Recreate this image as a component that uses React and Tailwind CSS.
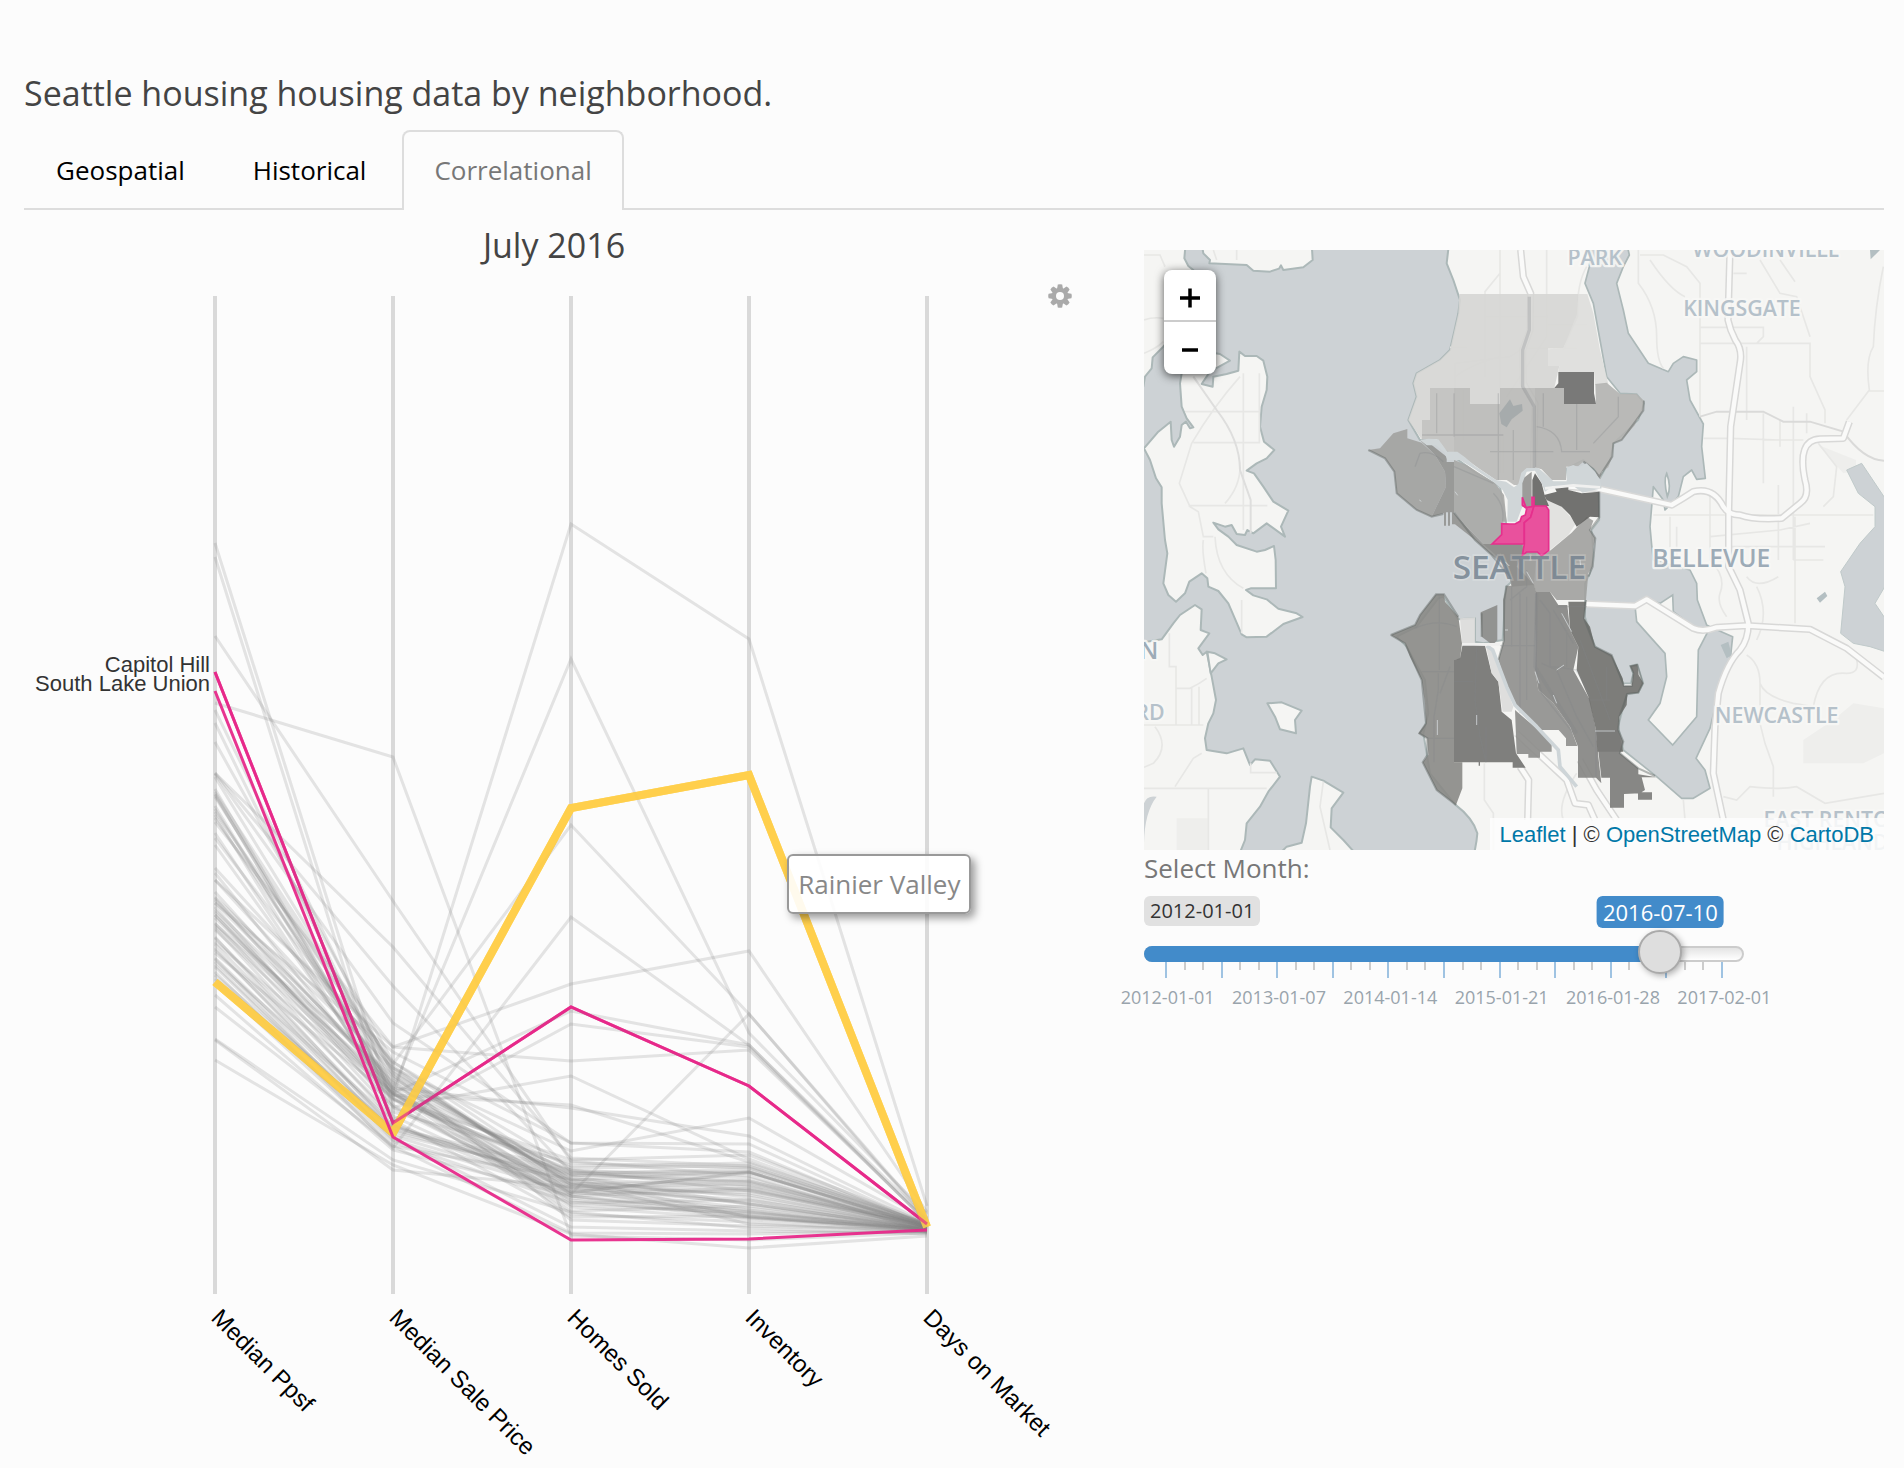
import React, { useState } from "react";

const AXES = [
  { x: 215, label: "Median Ppsf" },
  { x: 393, label: "Median Sale Price" },
  { x: 571, label: "Homes Sold" },
  { x: 749, label: "Inventory" },
  { x: 927, label: "Days on Market" },
];

// One row per neighborhood: height of its line on each of the five axes.
const NEIGHBORHOODS = [
  [543, 1108, 1196, 1190, 1224],
  [557, 1124, 1188, 1200, 1228],
  [636, 901, 1161, 1176, 1232],
  [703, 757, 1236, 1240, 1233],
  [710, 1075, 1220, 1226, 1230],
  [723, 1088, 1205, 1213, 1228],
  [742, 1062, 1180, 1172, 1226],
  [773, 947, 1158, 1166, 1224],
  [773, 986, 1172, 1182, 1227],
  [774, 1023, 1143, 1144, 1225],
  [777, 1068, 1185, 1195, 1228],
  [789, 1093, 1011, 1045, 1222],
  [792, 1066, 1192, 1210, 1230],
  [794, 1095, 1176, 1172, 1227],
  [795, 1090, 1190, 1216, 1231],
  [797, 1072, 1183, 1190, 1227],
  [806, 1097, 524, 639, 1206],
  [809, 1089, 659, 1033, 1214],
  [812, 1064, 825, 1014, 1220],
  [815, 1105, 1200, 1218, 1229],
  [818, 1078, 1174, 1169, 1226],
  [822, 1047, 984, 951, 1212],
  [833, 1099, 1175, 1181, 1224],
  [838, 1070, 1187, 1203, 1230],
  [845, 1093, 1194, 1014, 1218],
  [868, 1062, 1168, 1166, 1225],
  [873, 1095, 1105, 1162, 1224],
  [880, 1047, 1061, 1050, 1221],
  [880, 1073, 1184, 1204, 1229],
  [892, 1088, 1108, 1136, 1223],
  [897, 1068, 1151, 1118, 1220],
  [898, 1099, 1160, 1155, 1223],
  [900, 1082, 1194, 1188, 1228],
  [903, 1052, 1143, 1152, 1226],
  [903, 1080, 1179, 1187, 1227],
  [907, 1107, 1076, 1159, 1224],
  [910, 1083, 1202, 1214, 1229],
  [912, 1100, 1170, 1178, 1227],
  [915, 1094, 1193, 1172, 1226],
  [915, 1107, 1186, 1193, 1228],
  [918, 1090, 1207, 1219, 1230],
  [923, 1112, 1163, 1168, 1225],
  [924, 1076, 1182, 1224, 1232],
  [926, 1086, 1172, 1172, 1226],
  [928, 1120, 1024, 1047, 1222],
  [930, 1093, 1211, 1206, 1229],
  [937, 1130, 1173, 1185, 1226],
  [938, 1116, 1198, 1211, 1231],
  [942, 1094, 1166, 1163, 1224],
  [944, 1125, 1196, 1217, 1229],
  [948, 1134, 1176, 1204, 1228],
  [950, 1126, 1184, 1181, 1227],
  [953, 1098, 1214, 1222, 1232],
  [958, 1131, 1180, 1197, 1228],
  [959, 1140, 1192, 1173, 1227],
  [962, 1120, 1217, 1216, 1230],
  [965, 1136, 1189, 1208, 1229],
  [967, 1138, 1227, 1231, 1233],
  [972, 1148, 917, 1045, 1219],
  [975, 1128, 1170, 1191, 1226],
  [979, 1142, 1203, 1200, 1229],
  [983, 1146, 1233, 1234, 1231],
  [995, 1150, 1196, 1212, 1230],
  [1007, 1146, 1179, 1217, 1232],
  [1039, 1160, 1212, 1228, 1234],
  [1040, 1170, 1187, 1184, 1227],
  [1060, 1165, 1234, 1248, 1236],
];

const SELECTED = [
  { name: "Capitol Hill", row: [672, 1123, 1007, 1086, 1224] },
  { name: "South Lake Union", row: [691, 1137, 1240, 1239, 1230] },
];

const HOVERED = { name: "Rainier Valley", row: [982, 1133, 808, 775, 1227] };

const toPoints = (row) => row.map((y, i) => `${AXES[i].x},${y}`).join(" ");

function ParallelChart() {
  return (
    <svg viewBox="24 280 1060 1180" className="block w-full" role="img" aria-label="Parallel coordinates of housing measures">
      <g stroke="#d9d9d9" strokeWidth="4">
        {AXES.map((a) => (
          <line key={a.label} x1={a.x} x2={a.x} y1="296" y2="1294" />
        ))}
      </g>
      <polyline points={toPoints(SELECTED[0].row)} fill="none" stroke="#e7298a" strokeWidth="3" />
      <polyline points={toPoints(HOVERED.row)} fill="none" stroke="#ffcf4a" strokeOpacity="0.93" strokeWidth="8" />
      <g fill="none" stroke="#808080" strokeOpacity="0.2" strokeWidth="3">
        {NEIGHBORHOODS.filter((_, i) => i % 4 !== 0).map((row, i) => (
          <polyline key={i} points={toPoints(row)} />
        ))}
      </g>
      <g fill="none" stroke="#808080" strokeOpacity="0.2" strokeWidth="3">
        {NEIGHBORHOODS.filter((_, i) => i % 4 === 0).map((row, i) => (
          <polyline key={i} points={toPoints(row)} />
        ))}
      </g>
      <polyline points={toPoints(HOVERED.row)} fill="none" stroke="#ffcf4a" strokeOpacity="0.85" strokeWidth="8" />
      <polyline points={toPoints(SELECTED[0].row)} fill="none" stroke="#e7298a" strokeOpacity="0.7" strokeWidth="3" />
      <polyline points={toPoints(SELECTED[1].row)} fill="none" stroke="#e7298a" strokeOpacity="0.95" strokeWidth="3" />
      <g fontFamily="'Liberation Sans', sans-serif" fontSize="22" fill="#333" textAnchor="end">
        {SELECTED.map((s) => (
          <text key={s.name} x="210" y={s.row[0]}>{s.name}</text>
        ))}
      </g>
      <g fontFamily="'Liberation Sans', sans-serif" fontSize="24" fill="#000">
        {AXES.map((a) => (
          <text key={a.label} transform={`translate(${a.x - 5} 1319) rotate(45)`}>{a.label}</text>
        ))}
      </g>
    </svg>
  );
}

function GearIcon() {
  return (
    <svg viewBox="0 0 24 24" className="size-6" aria-hidden="true">
      <g fill="#aaa">
        {[0, 45, 90, 135].map((deg) => (
          <path key={deg} d="M9.8 0.6 Q12 -0.1 14.2 0.6 L15 5 V19 L14.2 23.4 Q12 24.1 9.8 23.4 L9 19 V5 Z" transform={`rotate(${deg} 12 12)`} />
        ))}
        <circle cx="12" cy="12" r="8" />
      </g>
      <circle cx="12" cy="12" r="4" fill="#fcfcfc" />
    </svg>
  );
}

const HIGHWAYS = [
  "M1800,30 L1794,240 Q1800,270 1816,300 Q1838,330 1830,370 L1802,560 L1796,820 V980 L1830,1050 L1855,1150 Q1855,1200 1830,1230 Q1790,1270 1765,1360 L1755,1460 L1750,1600 L1780,1740",
  "M1315,740 L1400,745 L1625,795 Q1660,775 1690,755 Q1750,740 1780,800 Q1795,825 1830,825 Q1870,840 1955,835 L2010,790 Q2040,770 2025,720 Q2000,600 2070,597 L2140,595 L2158,545",
  "M1368,1092 L1515,1098 L1550,1078 L1690,1165 Q1720,1178 1760,1162 L1850,1157 L2040,1168 L2150,1225 L2262,1312",
  "M1172,30 L1180,110 L1202,160 L1200,270 L1178,330 L1180,430 L1215,490 L1210,690",
  "M1160,1480 L1310,1620 L1335,1690 L1375,1695 L1395,1740",
  "M1350,1560 L1400,1650 L1460,1740",
  "M1170,1580 L1196,1620 L1193,1740",
];

const MINOR_ROADS =
  "M42,45 H90 L105,80 M250,30 L260,60 M320,30 V60 M42,240 Q70,230 100,235 M42,340 Q80,325 100,305" +
  " M165,515 H388 M190,608 H388 V400 M340,400 V870 M330,410 Q250,500 185,610 L148,730 L180,800 L205,815 L220,890 H250 M175,797 H412 M330,680 Q330,740 285,790 M220,900 Q215,930 228,1000 M255,890 Q260,1000 340,1045 M335,1080 V1180" +
  " M118,1180 V1280 H138 V1455 M138,1345 H180 Q210,1330 230,1315 M185,1340 V1455 M207,1340 V1455 M42,1455 H220 M75,1460 Q120,1520 70,1570 L42,1582 M215,1540 L190,1555 L135,1640 M42,1645 H410 M235,1645 V1830 M362,1570 V1598 H440 M580,1625 L570,1700 L600,1830" +
  " M1110,30 V700 M1110,100 L1065,155 V410 M1065,230 H1255 M960,322 H1010 M975,370 L1140,350 L1180,325 H1340 M975,410 Q1030,370 1110,350 M975,370 V600 M1250,30 V290 L1130,470 M1370,80 Q1340,130 1342,230 L1300,330 M1254,254 H1370 M890,585 H1120 V700 M1000,450 V600" +
  " M1525,30 V130 Q1580,200 1580,290 Q1580,360 1600,385 M1530,45 H1600 L1670,80 L1710,130 V530 M1560,60 Q1620,150 1665,170 M1710,262 H1900 V290 L1880,310 H1710 M1710,310 H2040 V410 L2085,510 V550 M1850,320 V540 M1810,100 H1850 M1890,60 L1950,160 L2000,170 L2040,290 M1950,60 L1995,125 M2260,80 Q2235,200 2230,320 Q2205,360 2218,450 L2150,540 M2218,453 H2262" +
  " M1720,595 H1800 L1950,600 H2020 M1900,520 V730 M1990,500 V960 M1950,540 V620 M2030,520 V580 M1570,825 H2230 M1640,860 V960 M1620,830 V960 M1740,760 V960 M1740,890 L1950,870 L2040,850 M1790,920 H2085 M1945,735 V960 M1995,830 V1150 M1990,960 H2080 M2065,610 L2120,680 L2110,770 L2080,800" +
  " M1850,1010 Q1880,1050 1945,1010 M1740,900 V960 Q1790,1010 1770,1060 Q1760,1090 1790,1130 M1880,1040 Q1920,1120 1880,1200 M1850,1245 Q1890,1270 1890,1330 Q1905,1370 1990,1390 L2050,1400 Q2070,1290 2150,1300 Q2190,1300 2180,1260 M1890,1330 L1890,1450 L1905,1510 L1930,1580 V1670 M1780,1670 L1820,1680 L1860,1640 Q1950,1650 2000,1640 L2085,1690 L2262,1660 M1063,1570 V1680 L1090,1720 V1830 M1660,1680 L1665,1740 M1300,1740 Q1280,1690 1340,1600";

const MAP_LABELS = [
  { text: "KINGSGATE", x: 1836, y: 228, size: 64, fill: "#b5c1ca" },
  { text: "WOODINVILLE", x: 1908, y: 52, size: 64, fill: "#b5c1ca" },
  { text: "PARK", x: 1394, y: 75, size: 64, fill: "#b5c1ca" },
  { text: "BELLEVUE", x: 1744, y: 982, size: 74, fill: "#9dabb7" },
  { text: "NEWCASTLE", x: 1940, y: 1448, size: 64, fill: "#b5c1ca" },
  { text: "EAST RENTON", x: 2115, y: 1760, size: 64, fill: "#b5c1ca" },
  { text: "HIGHLANDS", x: 2125, y: 1830, size: 64, fill: "#b5c1ca" },
  { text: "N", x: 57, y: 1258, size: 72, fill: "#9dabb7" },
  { text: "RD", x: 60, y: 1440, size: 64, fill: "#b5c1ca" },
];

// Neighborhood areas, in the coordinates of the translated group that holds them.
const DISTRICTS = [
  { fill: "#d6d6d4", d: "M298,-258 H655 V-190 L610,-95 H564 V-42 H598 L583,24 H210 V120 H186 V180 L145,120 L170,50 L160,10 L170,-20 L240,-60 L270,-90 L295,-200 Z M330,24 V72 H420 V24 Z" },
  { fill: "#dededc", d: "M655,-258 H682 L700,-200 L720,-90 L745,12 L705,15 L702,-24 H595 L598,-42 H564 V-92 L610,-95 L650,-195 Z" },
  { fill: "#c0c0be", d: "M210,24 H282 V230 L262,215 L230,178 H186 V120 H210 Z" },
  { fill: "#b9b9b7", d: "M282,24 H330 V72 H420 V24 H525 V268 L495,270 L475,315 H462 L440,300 L408,300 L360,268 L310,232 L282,220 Z" },
  { fill: "#b2b2b0", d: "M525,24 H612 V72 H708 L706,12 L740,8 L780,42 L830,42 L852,62 L850,92 L830,120 L825,135 L785,180 L760,190 L757,230 L745,262 L725,275 L722,296 L712,290 L705,268 L670,245 L655,258 L618,260 V300 H575 L545,268 L525,262 Z" },
  { fill: "#6c6c6a", d: "M595,-24 H702 V40 L708,72 H612 V24 H583 L595,10 Z" },
  { fill: "#a3a8aa", d: "M418,100 L450,58 L460,78 L486,72 L488,92 L455,118 L440,142 L424,132 Z" },
  { fill: "#a2a2a0", d: "M25,210 L60,205 L100,160 L142,147 V175 L185,188 L225,225 L255,275 L258,320 L215,410 L170,390 L110,340 L103,275 L75,235 Z" },
  { fill: "#939391", d: "M180,180 L215,195 L260,230 V246 H282 V398 L315,435 L370,492 H490 L492,515 L530,515 L522,615 L455,620 L440,560 L395,525 L345,480 L285,433 H276 V397 H270 V437 H264 V397 H258 V437 H252 V400 L215,410 L258,320 L255,275 L225,225 Z" },
  { fill: "#a8a8a6", d: "M282,240 L320,255 L405,310 L432,345 L440,425 H425 V462 L396,492 H370 L315,435 L282,395 Z" },
  { fill: "#e0e0de", d: "M555,355 L600,375 L648,430 L625,465 L567,512 Z" },
  { fill: "#a1a19f", d: "M492,515 H530 L545,528 L570,512 L635,458 L680,410 L700,422 L690,450 L706,475 L700,500 L698,560 L685,580 L678,660 H590 L570,636 H528 L520,612 L490,580 L475,540 Z" },
  { fill: "#929290", d: "M485,380 L483,300 L515,275 V380 Z" },
  { fill: "#646462", d: "M525,280 L545,310 L555,350 L567,378 H517 V300 Z" },
  { fill: "#646462", d: "M576,307 H625 V330 L665,340 L718,335 V412 L690,410 L650,440 L630,405 L605,380 L560,360 L552,345 L590,335 Z" },
  { fill: "#8f8f8d", d: "M370,492 H485 L490,515 L470,560 L490,580 L522,615 L530,640 L525,870 L535,930 L580,970 L630,1040 L652,1098 H618 V1075 L596,1050 H535 L510,1020 L465,975 L440,920 L415,840 L432,780 L430,660 L440,617 H455 V602 L440,580 L430,545 Z" },
  { fill: "#848482", d: "M528,636 H570 L595,675 H622 L630,750 L655,800 L640,870 L690,960 L708,1050 L715,1130 L724,1210 L708,1193 H654 V1100 L630,1040 L580,970 L535,930 L525,870 Z" },
  { fill: "#70706d", d: "M625,665 H678 L672,715 L690,740 L705,800 L755,825 L788,895 L792,918 L815,918 L820,880 L810,858 L832,852 L836,885 L850,910 L835,938 L802,942 L800,975 L778,1010 L775,1050 L790,1115 H712 L708,1050 L685,950 L650,870 L655,800 L630,750 Z" },
  { fill: "#7b7b79", d: "M708,1050 H775 L790,1085 L780,1120 L835,1165 V1183 L890,1192 H845 L855,1230 L840,1240 L792,1242 V1283 H750 V1193 H724 Z M834,1237 H876 V1259 H834 Z" },
  { fill: "#898986", d: "M228,643 H252 L255,665 L295,710 L306,790 L300,838 L282,840 V1147 H307 V1225 L288,1275 L230,1230 L188,1147 L205,1125 L202,1075 L175,1060 L198,1030 L195,970 L185,900 L150,830 L135,790 L92,765 L165,735 L180,705 Z" },
  { fill: "#727270", d: "M308,793 L375,797 L395,880 L415,905 L425,995 L455,1020 L468,1120 L497,1163 H458 V1147 H360 V1157 H356 V1147 H282 V840 L300,835 Z" },
  { fill: "#8c8c8a", d: "M362,697 L412,675 V780 L398,795 L365,770 Z" },
  { fill: "#dcdcda", d: "M300,715 L345,712 V790 H306 Z M378,797 L395,805 L460,980 L455,995 H428 L415,905 L395,880 Z" },
  { fill: "#8c8c8a", d: "M465,990 L535,1050 L575,1090 V1115 H540 V1133 H505 V1122 H470 Z" },
];

function SeattleMap() {
  return (
    <svg viewBox="42 30 2220 1800" preserveAspectRatio="xMidYMid slice" className="absolute inset-0 size-full" role="img" aria-label="Map of Seattle neighborhoods">
      <rect x="42" y="30" width="2220" height="1800" fill="#cdd2d5" />

      {/* land */}
      <g fill="#f5f5f3" stroke="#acb8b8" strokeWidth="6" strokeLinejoin="round">
        <path d="M20,10 H167 L163,55 L175,78 L190,90 L150,260 L100,320 L68,352 L65,385 L45,410 L40,440 L20,460 Z" />
        <path d="M215,10 L220,40 L240,60 L238,70 L350,75 L370,92 L420,95 L447,86 L453,76 L460,90 L520,82 L548,60 L545,10 Z" />
        <path d="M155,400 L150,430 L155,500 L170,535 L190,562 L180,565 L168,545 L155,555 L150,590 L132,620 L125,600 L122,545 L85,575 L42,625 L60,660 L78,715 L95,742 L95,790 L105,900 L112,940 L100,1030 L115,1065 L138,1085 L165,1060 L178,1025 L215,1000 L232,1015 L235,1040 L265,1053 L295,1090 L335,1183 L350,1192 L410,1190 L460,1152 L518,1131 L500,1120 L445,1106 L410,1078 L370,1066 L348,1050 L362,1045 L438,1045 L437,960 L432,918 L405,930 L380,935 L320,915 L295,890 L265,868 L250,848 L285,860 L305,855 L320,882 L345,885 L352,870 L370,880 L410,850 L465,890 L453,860 L475,812 L430,785 L400,740 L372,700 L350,692 L380,670 L410,655 L433,630 L402,605 L390,560 L395,500 L410,450 L412,410 L400,362 L380,348 L345,348 L328,335 L325,392 L290,402 L250,410 L248,440 L215,432 L240,395 L300,362 L270,342 L200,330 Z" />
        <path d="M20,1210 L95,1198 L130,1150 L150,1125 L195,1095 L215,1108 L212,1170 L238,1180 L205,1225 L218,1245 L230,1235 L245,1310 L258,1380 L250,1420 L235,1450 L225,1495 L230,1530 L290,1540 L340,1525 L360,1575 L375,1558 L420,1562 L450,1610 L415,1655 L390,1700 L350,1750 L345,1800 L325,1850 H20 Z" />
        <path d="M232,1235 L255,1240 L290,1258 L265,1270 L242,1300 Z" />
        <path d="M412,1390 L455,1387 L515,1412 L495,1440 L498,1480 L450,1468 L435,1430 Z" />
        <path d="M545,1610 L580,1622 L640,1658 L605,1705 L602,1762 L640,1800 L685,1850 H440 L470,1820 L515,1808 L528,1750 L540,1640 Z" />
        <path d="M957,10 L950,70 L970,120 L990,180 L985,220 L975,265 L960,330 L930,360 L860,400 L850,430 L860,470 L835,540 L870,600 L905,600 L985,660 L1040,700 L1110,740 L1130,860 L1140,1010 L1145,1025 L1128,1040 L1118,1200 L1060,1210 L1035,1205 V1135 L985,1138 L940,1070 L925,1075 L860,1160 L800,1190 L830,1220 L885,1320 L895,1420 L880,1480 L900,1600 L975,1693 Q1030,1735 1042,1780 Q1040,1810 1030,1850 H2282 V10 Z" />
      </g>
      <path d="M42,1830 Q40,1720 80,1670 Q50,1665 42,1690 Z" fill="#cdd2d5" />
      <path d="M140,1735 H235 V1830 H140 Z M2020,1570 V1500 L2110,1440 L2170,1390 L2262,1405 V1540 L2200,1570 Z M2065,615 L2178,660 V690 L2140,700 Z" fill="#eeeeec" />

      {/* lakes */}
      <g fill="#cdd2d5" stroke="#acb8b8" strokeWidth="5" strokeLinejoin="round">
        <path d="M1385,10 L1378,80 L1365,130 L1390,190 L1410,300 L1430,410 L1470,460 L1520,462 L1542,490 L1525,540 L1450,610 L1440,660 L1410,715 L1395,690 L1360,660 L1310,685 L1315,730 L1405,755 L1408,840 L1385,870 L1390,950 L1380,1000 L1365,1030 V1130 L1395,1220 L1445,1250 L1480,1330 L1502,1330 L1510,1300 L1500,1278 L1522,1272 L1540,1330 L1525,1358 L1490,1362 L1465,1460 L1480,1530 L1580,1610 L1655,1675 L1690,1675 L1740,1645 L1725,1590 L1698,1555 L1740,1465 L1765,1360 L1800,1265 L1808,1190 L1740,1160 L1730,1155 L1702,1080 L1700,1030 L1680,990 L1570,960 L1565,915 L1560,860 L1570,740 L1600,780 L1605,810 L1645,770 L1660,710 L1685,690 L1700,718 L1726,715 L1715,620 L1720,552 L1680,480 L1670,420 L1700,395 L1700,360 L1660,350 L1630,370 L1615,395 L1555,370 L1495,280 L1480,210 L1460,130 L1480,80 L1498,45 L1490,10 Z" />
        <path d="M2195,670 L2150,690 L2185,760 L2235,800 L2235,860 L2190,910 L2132,995 L2145,1040 L2132,1180 L2170,1210 L2220,1220 L2282,1240 V1160 L2235,1090 L2282,1010 V800 Z" strokeWidth="3" stroke="#c0caca" />
      </g>
      <path d="M1515,1098 L1550,1078 L1590,1090 L1628,1065 L1630,1115 L1690,1160 L1732,1178 L1705,1230 L1700,1430 L1628,1515 L1555,1440 L1590,1390 L1610,1310 L1605,1240 L1560,1190 L1520,1145 Z" fill="#f5f5f3" stroke="#acb8b8" strokeWidth="5" />
      <path d="M1610,700 Q1600,720 1612,770 Q1625,740 1610,700 Z" fill="#f5f5f3" stroke="#acb8b8" strokeWidth="5" />
      <path d="M2060,1075 L2085,1055 L2092,1068 L2070,1088 Z M1772,1215 L1795,1205 L1805,1245 L1790,1255 Z M2220,30 H2250 L2222,58 Z" fill="#b4bfc2" />

      <path d={MINOR_ROADS} fill="none" stroke="#e7e7e5" strokeWidth="5" />
      <path d="M190,410 L260,510 Q330,600 330,690 L362,780 V880" fill="none" stroke="#dededd" strokeWidth="6" />
      <path d="M1710,530 L1760,515 H1900 L1960,545 H2040 L2140,575 Q2200,660 2262,662" fill="none" stroke="#dadad9" strokeWidth="6" />
      <g fill="none" strokeLinejoin="round">
        {HIGHWAYS.map((d) => (
          <path key={`c${d}`} d={d} stroke="#d8d8d7" strokeWidth="22" />
        ))}
        {HIGHWAYS.map((d) => (
          <path key={`f${d}`} d={d} stroke="#fafaf9" strokeWidth="13" />
        ))}
      </g>

      {/* place names */}
      <g fontFamily="'Open Sans', sans-serif" fontWeight="600" textAnchor="middle" stroke="#f8f8f6" strokeOpacity="0.85" strokeWidth="14" strokeLinejoin="round" paintOrder="stroke">
        {MAP_LABELS.map((l) => (
          <text key={l.text} x={l.x} y={l.y} fontSize={l.size} fill={l.fill}>{l.text}</text>
        ))}
      </g>

      {/* neighborhoods */}
      <g transform="translate(690 420)">
        <g fillOpacity="0.9">
          {DISTRICTS.map((p) => (
            <path key={p.d} d={p.d} fill={p.fill} />
          ))}
        </g>
        <path
          d="M25,210 L75,235 L103,275 L110,340 L170,390 L215,410 L250,402 M282,398 L345,480 L395,525 L440,580 M92,765 L135,790 L185,900 L198,1030 L178,1060 L202,1075 V1125 L188,1147 L230,1230 L288,1275 M92,765 L165,735 L180,705 L228,643 H252 L295,710 M440,617 L432,660 V780 L415,840 M365,700 V770 M678,660 L672,715 L705,800 L755,825 L792,918 L815,918 L820,880 L812,858 L832,855 L848,910 L835,938 L802,942 L778,1010 L775,1050 L790,1085 L780,1120 L835,1165 L885,1188 M718,335 V412 L690,450 L706,475 L698,560 L685,590 M852,62 L850,92 L785,180 L760,190 L757,230 L718,290 L700,268 L670,245"
          fill="none"
          stroke="#5f6664"
          strokeOpacity="0.45"
          strokeWidth="6"
        />
        <g fill="none" stroke="#808488" strokeOpacity="0.28" strokeWidth="4">
          <path d="M238,643 V870 M165,745 Q230,715 290,740 M185,875 H282 M235,880 V930 L222,1010 V1147 M270,860 L240,940 M200,1075 H282 M350,800 L345,960 L360,1070 L378,1147 M378,1040 V1147 M282,905 H340 M420,797 H525 M455,620 V800 M480,640 V1000 M500,650 V960 M450,660 L500,620 L500,570 M528,640 V870 L545,940 L640,1060 M540,660 L570,700 V860 L600,862 L650,870 L690,950 M580,690 L640,790 M545,850 L590,870 L650,1010 L700,1100 M620,750 V860 M660,780 L750,1020 M685,960 H750 M740,860 V960 M708,1050 V1190 M590,680 H680 M415,40 V300 M230,40 V160 M282,40 V170 M186,165 H430 M460,150 V300 M390,215 H580 M530,140 Q600,150 605,215 H690 M550,40 V140 M650,72 V210 M775,50 V110 L700,190 M282,260 L400,310 M400,340 Q440,380 425,440 M165,260 L180,220 Q215,210 250,245" />
          <path d="M508,-250 V-150 L488,-90 V20 L523,80 V268 M530,640 L525,860 L650,1060" strokeWidth="10" />
        </g>
        <path d="M180,180 L205,176 L235,178 L262,215 H292 L315,232 L345,258 L408,300 L438,305 L462,322 L475,312 L484,278 L500,264 H535 L552,278 L580,304 H620 V262 L640,255 L655,262 L680,250 L705,275 L720,300 L725,325 L668,338 L640,318 L578,318 L555,335 L545,310 L525,272 L500,275 L487,310 V380 L470,425 H442 L443,360 L428,330 L400,305 L345,268 L300,240 H262 L252,215 L228,196 L200,196 Z" fill="#d0d6d8" />
        <path d="M380,797 L398,810 L440,920 L465,975 L530,1040 L595,1110 L600,1160 L650,1220" fill="none" stroke="#ced5d8" strokeWidth="11" strokeLinejoin="round" />
        <path d="M306,793 H420 M555,325 L640,316 L720,322" fill="none" stroke="#f0f0ef" strokeWidth="8" />
        <path d="M525,875 L537,910 M580,945 L590,970 M435,545 L448,558 M435,750 H444 M590,870 L612,855 M648,870 L652,880 M705,1053 H765 M232,1020 V1065 M350,1005 V1035 M178,360 L184,364 M285,335 L293,346 M660,540 L662,560 M500,575 L520,610 M605,700 L635,755" stroke="#d5dadc" strokeOpacity="0.8" strokeWidth="3" />
        <g fill="#e9519d" stroke="#e62f8d" strokeWidth="5">
          <path d="M396,492 L425,464 V431 L450,432 L465,432 L480,424 L485,410 L496,405 L500,386 L487,375 V352 L498,382 L516,380 V352 L522,352 V380 L512,412 L493,428 V492 Z" />
          <path d="M493,428 L512,412 L522,378 H558 L566,390 V512 L545,528 L532,516 H500 L487,526 L493,492 Z" />
        </g>
      </g>
      <text x="1168" y="1018" fontFamily="'Open Sans', sans-serif" fontSize="100" fontWeight="600" fill="#6f7e8c" fillOpacity="0.8" textAnchor="middle" stroke="#fff" strokeOpacity="0.2" strokeWidth="10" paintOrder="stroke">SEATTLE</text>
    </svg>
  );
}

function MapPanel() {
  return (
    <div className="relative h-[600px] w-full overflow-hidden">
      <SeattleMap />
      <div className="absolute left-5 top-5 flex w-[52px] flex-col overflow-hidden rounded-lg bg-white shadow-[0_2px_10px_rgba(0,0,0,0.65)]">
        <button type="button" aria-label="Zoom in" className="flex h-[52px] items-center justify-center border-b-2 border-[#ccc] pt-[6px]">
          <svg viewBox="0 0 20 20" className="size-5" stroke="#000" strokeWidth="3.5"><path d="M0 10H20M10 0.5V19.5" /></svg>
        </button>
        <button type="button" aria-label="Zoom out" className="flex h-[52px] items-center justify-center pt-1">
          <svg viewBox="0 0 20 20" className="size-5" stroke="#000" strokeWidth="3.5"><path d="M2 10H18" /></svg>
        </button>
      </div>
      <p className="absolute bottom-0 right-0 h-8 whitespace-nowrap bg-[#fdfdfd]/85 px-[10px] font-['Liberation_Sans',sans-serif] text-[22px] leading-[34px] text-[#333]">
        <a href="#leaflet" className="text-[#0078a8]">Leaflet</a> | ©{" "}
        <a href="#osm" className="text-[#0078a8]">OpenStreetMap</a> ©{" "}
        <a href="#cartodb" className="text-[#0078a8]">CartoDB</a>
      </p>
    </div>
  );
}

const TICK_LABELS = ["2012-01-01", "2013-01-07", "2014-01-14", "2015-01-21", "2016-01-28", "2017-02-01"];

function MonthSlider() {
  const [day, setDay] = useState(1652);
  const position = `calc(22px + (100% - 44px) * ${day / 1858})`;
  const date = new Date(Date.UTC(2012, 0, 1 + day)).toISOString().slice(0, 10);
  return (
    <div className="w-full max-w-[600px]">
      <label htmlFor="month" className="block text-[26px] leading-9 text-[#777]">Select Month:</label>
      <div className="relative mt-[10px] flex h-8 items-start">
        <span className="h-[30px] rounded-md bg-[#e1e1e1] px-[6px] text-xl leading-[30px] text-[#333]">2012-01-01</span>
        <output htmlFor="month" className="absolute top-0 h-8 -translate-x-1/2 whitespace-nowrap rounded-md bg-[#428bca] px-[6px] text-[22px] leading-8 text-white" style={{ left: position }}>{date}</output>
      </div>
      <div className="relative mt-[18px] h-4 rounded-lg border-2 border-[#ccc] bg-linear-to-b from-[#e4e4e4] to-white">
        <div className="absolute -left-[2px] -top-[2px] h-4 rounded-l-lg bg-[#428bca]" style={{ width: position }} />
        <input
          id="month"
          type="range"
          min="0"
          max="1858"
          value={day}
          onChange={(e) => setDay(Number(e.target.value))}
          className="absolute -left-[2px] -top-[18px] z-10 h-11 w-[calc(100%+4px)] appearance-none bg-transparent outline-none [&::-webkit-slider-thumb]:size-11 [&::-webkit-slider-thumb]:appearance-none [&::-webkit-slider-thumb]:rounded-full [&::-webkit-slider-thumb]:border-2 [&::-webkit-slider-thumb]:border-[#aaa] [&::-webkit-slider-thumb]:bg-[#dedede] [&::-webkit-slider-thumb]:shadow-[2px_2px_6px_rgba(0,0,0,0.3)]"
        />
      </div>
      <div className="flex h-4 items-start justify-between px-[21px]">
        {Array.from({ length: 31 }, (_, i) => (
          <span key={i} className={i % 3 === 0 ? "h-4 w-[2px] bg-[#9fc3e2]" : "h-2 w-[2px] bg-[#ccc]"} />
        ))}
      </div>
      <div className="-ml-8 -mr-9 mt-[6px] grid grid-cols-6 text-center text-lg leading-[26px] text-[#99a4ac]">
        {TICK_LABELS.map((t) => (
          <span key={t}>{t}</span>
        ))}
      </div>
    </div>
  );
}

const TABS = ["Geospatial", "Historical", "Correlational"];

export default function App() {
  const [active, setActive] = useState("Correlational");
  return (
    <main className="min-h-screen bg-[#fcfcfc] pl-6 pr-5 pt-[73px] font-['Open_Sans',sans-serif] text-[#444]">
      <h1 className="text-[34px] leading-10">Seattle housing housing data by neighborhood.</h1>
      <div role="tablist" className="mt-[17px] flex gap-1 border-b-2 border-[#ddd]">
        {TABS.map((t) => (
          <button
            key={t}
            type="button"
            role="tab"
            aria-selected={t === active}
            onClick={() => setActive(t)}
            className={
              t === active
                ? "-mb-[2px] rounded-t-lg border-2 border-b-0 border-[#ddd] bg-[#fcfcfc] px-[30px] pb-[22px] pt-5 text-[26px] leading-9 text-[#777]"
                : "-mb-[2px] border-2 border-transparent px-[30px] py-5 text-[26px] leading-9 text-black"
            }
          >
            {t}
          </button>
        ))}
      </div>
      <div className="grid grid-cols-[1060fr_740fr] gap-[60px]">
        <section className="pt-[15px]">
          <h2 className="text-center text-[34px] leading-10">July 2016</h2>
          <div className="relative mt-[15px]">
            <ParallelChart />
            <button type="button" aria-label="Chart settings" className="absolute right-3 top-1">
              <GearIcon />
            </button>
            <div role="tooltip" className="absolute left-[72%] top-[574px] rounded-md border-2 border-[#999] bg-white/90 px-[9px] py-2 text-[26px] leading-10 text-[#888] shadow-[4px_4px_8px_rgba(0,0,0,0.4)]">
              Rainier Valley
            </div>
          </div>
        </section>
        <section className="pt-10">
          <MapPanel />
          <MonthSlider />
        </section>
      </div>
    </main>
  );
}
